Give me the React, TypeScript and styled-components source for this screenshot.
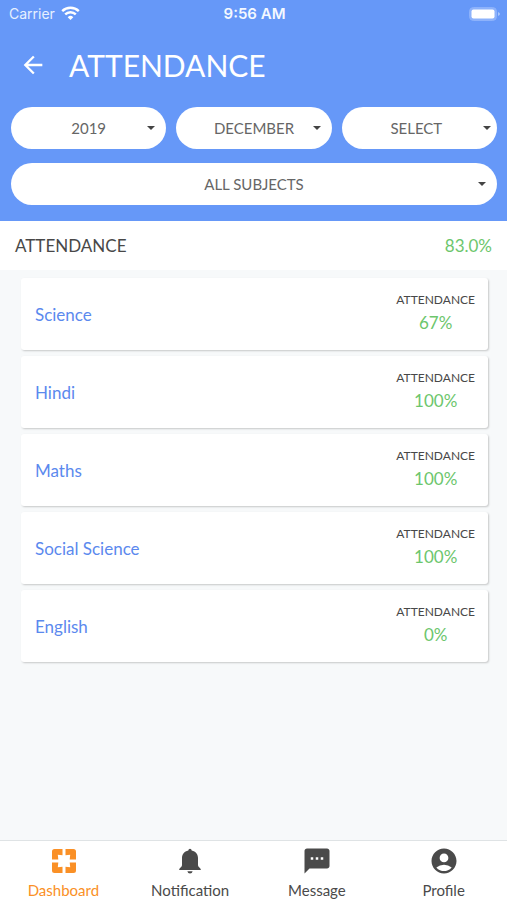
import React from "react";
import styled, { createGlobalStyle } from "styled-components";
import { MdAccountCircle, MdArrowBack, MdSms } from "react-icons/md";

const GlobalStyle = createGlobalStyle`
  *, *::before, *::after { box-sizing: border-box; }
  body {
    margin: 0;
    background: #f7f9fa;
    color: #484848;
    font-family: Lato, "Open Sans", sans-serif;
  }
`;

const Screen = styled.div`
  display: flex;
  flex-direction: column;
  min-height: 100vh;
`;

const Header = styled.header`
  background: #6698f8;
  color: #fff;
`;

const StatusBar = styled.div`
  display: grid;
  grid-template-columns: 1fr auto 1fr;
  align-items: center;
  height: 27px;
  padding: 0 7px 0 9px;
  font: 400 14px/20px Inter, sans-serif;
`;

const Carrier = styled.span`
  display: flex;
  align-items: center;
  gap: 6px;
  color: #e6f0ff;
`;

const Clock = styled.time`
  font-size: 15px;
  font-weight: 600;
  color: #f4f8ff;
`;

const BatteryIcon = styled.svg`
  justify-self: end;
`;

const TitleRow = styled.div`
  display: flex;
  align-items: center;
  gap: 22px;
  height: 75px;
  padding: 0 19px;
`;

const BackButton = styled.button`
  display: flex;
  padding: 0;
  border: 0;
  background: none;
  color: #fff;
  cursor: pointer;
`;

const Title = styled.h1`
  margin: 0;
  font-size: 30px;
  line-height: 36px;
  font-weight: 400;
`;

const Filters = styled.form`
  display: grid;
  grid-template-columns: repeat(3, 1fr);
  gap: 14px 10px;
  padding: 5px 10px 16px 11px;
`;

const SelectPill = styled.div<{ $wide?: boolean; $tight?: boolean }>`
  display: grid;
  align-items: center;
  grid-column: ${(p) => (p.$wide ? "1 / -1" : "auto")};
  height: 42px;
  border-radius: 21px;
  background: #fff;

  > * {
    grid-area: 1 / 1;
  }

  > svg {
    justify-self: end;
    margin-right: ${(p) => (p.$tight ? 5 : 10)}px;
    pointer-events: none;
  }

  > select {
    padding: 0 ${(p) => (p.$tight ? 6 : 0)}px 0 0;
  }
`;

const Select = styled.select`
  appearance: none;
  width: 100%;
  height: 100%;
  border: 0;
  border-radius: 21px;
  background: transparent;
  color: #666;
  font: 400 15px/20px Lato, sans-serif;
  text-align: center;
  text-align-last: center;
`;

const Summary = styled.section`
  display: flex;
  justify-content: space-between;
  align-items: center;
  height: 49px;
  padding: 0 15px;
  background: #fff;
  font-size: 17px;
  line-height: 24px;
`;

const SummaryLabel = styled.h2`
  margin: 0;
  font: inherit;
`;

const Percent = styled.span`
  color: #6cc66c;
  font-size: 17px;
  line-height: 24px;
`;

const SubjectList = styled.ul`
  flex: 1;
  display: flex;
  flex-direction: column;
  gap: 6px;
  margin: 0;
  padding: 8px 19px 8px 21px;
  list-style: none;
`;

const SubjectCard = styled.li`
  display: flex;
  justify-content: space-between;
  align-items: center;
  height: 72px;
  padding: 0 13px 0 14px;
  border-radius: 3px;
  background: #fff;
  box-shadow: 1px 1px 2px rgba(0, 0, 0, 0.2);
`;

const SubjectName = styled.span`
  padding-top: 2px;
  color: #5b89ee;
  font-size: 17px;
  line-height: 24px;
`;

const Score = styled.div`
  display: flex;
  flex-direction: column;
  align-items: center;
  gap: 1px;
  padding-bottom: 4px;
`;

const ScoreLabel = styled.span`
  font-size: 12px;
  line-height: 20px;
`;

const TabBar = styled.nav`
  position: sticky;
  bottom: 0;
  display: grid;
  grid-template-columns: repeat(4, 1fr);
  height: 60px;
  border-top: 1px solid #dfe3e5;
  background: #fff;
`;

const Tab = styled.a<{ $active?: boolean }>`
  display: flex;
  flex-direction: column;
  align-items: center;
  padding-top: 5px;
  gap: 5px;
  color: ${(p) => (p.$active ? "#fa9026" : "#4a4a4a")};
  font-size: 15px;
  line-height: 18px;
  text-decoration: none;
`;

const Caret = () => (
  <svg width="10" height="6" viewBox="0 0 10 6" aria-hidden="true">
    <path d="M1 1h8L5 5z" fill="#444" />
  </svg>
);

const WifiIcon = () => (
  <svg width="19" height="15" viewBox="0 0 19 15" fill="none" stroke="#fff" strokeWidth="2.4" aria-hidden="true">
    <path d="M1.2 5.1a11.8 11.8 0 0 1 16.6 0M4.2 8.4a7.5 7.5 0 0 1 10.6 0" />
    <path d="M9.5 14l-2.8-2.8a4 4 0 0 1 5.6 0z" fill="#fff" stroke="none" />
  </svg>
);

const DashboardIcon = () => (
  <svg width="30" height="30" viewBox="0 0 30 30" fill="currentColor" aria-hidden="true">
    <g transform="translate(1 0)">
      <path id="tile" d="M5.5 3h8v6.3L8.8 8.8l.5 4.7H3v-8Q3 3 5.5 3z" />
      <use href="#tile" transform="rotate(90 15 15)" />
      <use href="#tile" transform="rotate(180 15 15)" />
      <use href="#tile" transform="rotate(270 15 15)" />
    </g>
  </svg>
);

const BellIcon = () => (
  <svg width="30" height="30" viewBox="0 0 30 30" fill="currentColor" aria-hidden="true">
    <path d="M13.3 4.4Q13.5 2.8 15 2.8t1.7 1.6C20.8 5.2 23 8.3 23 12v7.2c0 1.8 2.8 2.6 2.8 4.3v.5H4.2v-.5c0-1.7 2.8-2.5 2.8-4.3V12c0-3.7 2.2-6.8 6.3-7.6z" />
    <path d="M12.4 25.3h5.2Q17.2 27.6 15 27.6t-2.6-2.3z" />
  </svg>
);

const filters = [
  { label: "Year", value: "2019" },
  { label: "Month", value: "DECEMBER" },
  { label: "Day", value: "SELECT", tight: true },
  { label: "Subject", value: "ALL SUBJECTS", wide: true },
];

const subjects = [
  { name: "Science", percent: 67 },
  { name: "Hindi", percent: 100 },
  { name: "Maths", percent: 100 },
  { name: "Social Science", percent: 100 },
  { name: "English", percent: 0 },
];

const tabs = [
  { label: "Dashboard", icon: <DashboardIcon />, active: true },
  { label: "Notification", icon: <BellIcon /> },
  { label: "Message", icon: <MdSms size={30} /> },
  { label: "Profile", icon: <MdAccountCircle size={30} /> },
];

export default function App() {
  return (
    <>
      <GlobalStyle />
      <Screen>
        <Header>
          <StatusBar>
            <Carrier>
              Carrier
              <WifiIcon />
            </Carrier>
            <Clock>9:56 AM</Clock>
            <BatteryIcon width="31" height="14" viewBox="0 0 31 14" aria-hidden="true">
              <rect x=".5" y=".5" width="27" height="13" rx="4" fill="#8db2fb" stroke="#8db2fb" />
              <rect x="2.5" y="2.5" width="23" height="9" rx="2" fill="#fff" />
              <path d="M29 5v4q2-1 2-2t-2-2z" fill="#a9c6fc" />
            </BatteryIcon>
          </StatusBar>
          <TitleRow>
            <BackButton type="button" aria-label="Back">
              <MdArrowBack size={28} />
            </BackButton>
            <Title>ATTENDANCE</Title>
          </TitleRow>
          <Filters>
            {filters.map((f) => (
              <SelectPill key={f.label} $wide={f.wide} $tight={f.tight}>
                <Select aria-label={f.label} defaultValue={f.value}>
                  <option>{f.value}</option>
                </Select>
                <Caret />
              </SelectPill>
            ))}
          </Filters>
        </Header>
        <Summary>
          <SummaryLabel>ATTENDANCE</SummaryLabel>
          <Percent>83.0%</Percent>
        </Summary>
        <SubjectList>
          {subjects.map((s) => (
            <SubjectCard key={s.name}>
              <SubjectName>{s.name}</SubjectName>
              <Score>
                <ScoreLabel>ATTENDANCE</ScoreLabel>
                <Percent>{s.percent}%</Percent>
              </Score>
            </SubjectCard>
          ))}
        </SubjectList>
        <TabBar>
          {tabs.map((t) => (
            <Tab key={t.label} href="#" $active={t.active} aria-current={t.active ? "page" : undefined}>
              {t.icon}
              {t.label}
            </Tab>
          ))}
        </TabBar>
      </Screen>
    </>
  );
}
